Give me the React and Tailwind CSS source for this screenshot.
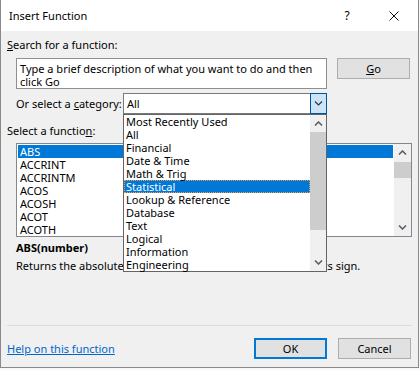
import React from 'react';

const categories = [
  'Most Recently Used',
  'All',
  'Financial',
  'Date & Time',
  'Math & Trig',
  'Statistical',
  'Lookup & Reference',
  'Database',
  'Text',
  'Logical',
  'Information',
  'Engineering',
];

const functions = ['ABS', 'ACCRINT', 'ACCRINTM', 'ACOS', 'ACOSH', 'ACOT', 'ACOTH'];

// small chevron used in scrollbars and the combo button
function Chevron({ up, bold }) {
  return (
    <svg width="9" height="5" viewBox="0 0 9 5">
      <polyline
        points={up ? '1,4.5 4.5,1 8,4.5' : '1,0.5 4.5,4 8,0.5'}
        fill="none"
        stroke="currentColor"
        strokeWidth={bold ? 1.6 : 1.1}
      />
    </svg>
  );
}

function ScrollBar({ width, thumbOffset, thumbHeight }) {
  return (
    <div className={`${width} flex flex-col bg-[#f0f0f0] text-[#606060]`}>
      <div className="h-[17px] flex items-center justify-center">
        <Chevron up bold />
      </div>
      <div className="flex-1" style={{ paddingTop: thumbOffset }}>
        <div className="bg-[#cdcdcd]" style={{ height: thumbHeight }} />
      </div>
      <div className="h-[17px] flex items-center justify-center">
        <Chevron bold />
      </div>
    </div>
  );
}

export default function App() {
  return (
    <div className="w-[420px] h-[370px] bg-[#f7f7f7] font-['Noto_Sans',sans-serif] text-[11px] leading-[13px] text-black">
      <div className="w-[419px] h-[368px] flex flex-col border-l border-r border-b border-[#8a8a8a]">
        {/* Title bar */}
        <div className="h-[31px] bg-white flex items-center pl-[8px]">
          <span className="flex-1">Insert Function</span>
          <span className="w-[12px] text-center text-[12px] mr-[36px]">?</span>
          <svg width="10" height="10" viewBox="0 0 10 10" className="mr-[19px]">
            <path d="M0.5 0.5 L9.5 9.5 M9.5 0.5 L0.5 9.5" stroke="#111" strokeWidth="1" />
          </svg>
        </div>

        {/* Body */}
        <div className="relative flex-1 bg-[#f0f0f0] flex flex-col pl-[6px] pt-[7px]">
          <div>
            <u>S</u>earch for a function:
          </div>

          <div className="mt-[7px] ml-[9px] flex items-start">
            <div className="w-[311px] h-[31px] bg-white border border-[#8f8f8f] p-[3px] pt-[3px]">
              Type a brief description of what you want to do and then click Go
            </div>
            <button className="ml-[10px] w-[73px] h-[21px] bg-[#e1e1e1] border border-[#adadad] text-[11px] leading-[13px]">
              <u>G</u>o
            </button>
          </div>

          <div className="mt-[4px] ml-[9px] flex items-center">
            <div className="w-[107px]">
              Or select a <u>c</u>ategory:
            </div>
            <div className="w-[204px] h-[21px] flex bg-white border-y border-l border-[#7a7a7a]">
              <div className="flex-1 pl-[3px] flex items-center">All</div>
              <div className="w-[17px] -my-px h-[21px] bg-[#cce4f7] border border-[#005499] flex items-center justify-center text-[#333]">
                <Chevron />
              </div>
            </div>
          </div>

          <div className="mt-[10px]">
            Select a functio<u>n</u>:
          </div>

          <div className="mt-[6px] ml-[9px] w-[396px] h-[94px] bg-white border border-[#828790] flex">
            <div className="flex-1 p-[1px]">
              {functions.map((f, i) => (
                <div
                  key={f}
                  className={`h-[13px] pl-[2px] ${i === 0 ? 'bg-[#0078d7] text-white' : ''}`}
                >
                  {f}
                </div>
              ))}
            </div>
            <ScrollBar width="w-[17px]" thumbOffset={1} thumbHeight={16} />
          </div>

          <div className="mt-[4px] ml-[9px] font-bold">ABS(number)</div>
          <div className="mt-[5px] ml-[9px]">
            Returns the absolute value of a number, a number without its sign.
          </div>

          <div className="mt-[53px] w-[405px] h-px bg-[#dadada]" />

          <div className="mt-[12px] flex items-center w-[404px]">
            <a href="#" className="flex-1 text-[#0066cc] underline">
              Help on this function
            </a>
            <button className="w-[73px] h-[21px] bg-[#e1e1e1] border-2 border-[#0078d7] text-[11px] leading-[13px]">
              OK
            </button>
            <button className="ml-[11px] w-[73px] h-[21px] bg-[#e1e1e1] border border-[#adadad] text-[11px] leading-[13px]">
              Cancel
            </button>
          </div>

          {/* Open category dropdown */}
          <div className="absolute left-[122px] top-[83px] w-[204px] h-[158px] bg-white border border-[#646464] flex">
            <div className="flex-1">
              {categories.map((c) => (
                <div
                  key={c}
                  className={
                    c === 'Statistical'
                      ? 'h-[13px] pl-[1px] bg-[#0078d7] text-white border border-dotted border-[#f0a040] leading-[11px]'
                      : 'h-[13px] pl-[2px]'
                  }
                >
                  {c}
                </div>
              ))}
            </div>
            <ScrollBar width="w-[16px]" thumbOffset={0} thumbHeight={98} />
          </div>
        </div>
      </div>
    </div>
  );
}
